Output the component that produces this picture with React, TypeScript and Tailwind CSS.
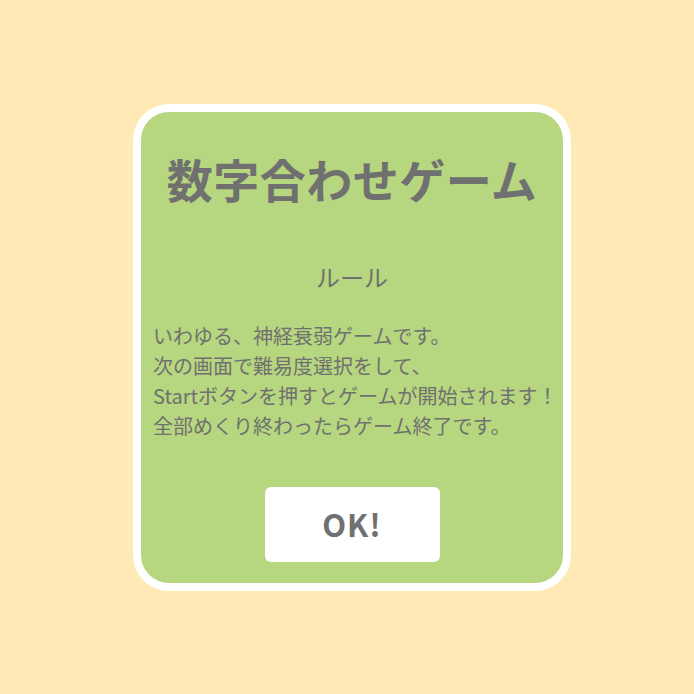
export default function App() {
  return (
    <div
      className="flex h-[694px] w-full items-center justify-center bg-[#ffe9b4]"
      style={{ fontFamily: '"Noto Sans CJK JP", "Noto Sans", sans-serif' }}
    >
      <div className="ml-[10px] flex h-[487px] w-[438px] flex-col items-center rounded-[36px] border-8 border-white bg-[#b6d67f] text-[#707070]">
        <h1 className="pt-[34px] text-[46px] font-bold leading-[64px] tracking-[0.5px]">数字合わせゲーム</h1>
        <h2 className="mt-[49px] text-[24px] leading-[36px]">ルール</h2>
        <p className="mt-[26px] self-stretch pl-[12px] text-[20px] leading-[30px] whitespace-nowrap">
          いわゆる、神経衰弱ゲームです。
          <br />
          次の画面で難易度選択をして、
          <br />
          Startボタンを押すとゲームが開始されます！
          <br />
          全部めくり終わったらゲーム終了です。
        </p>
        <button className="mt-[46px] h-[75px] w-[175px] rounded-md bg-white text-[31px] font-bold tracking-[1px] text-[#707070]">
          OK!
        </button>
      </div>
    </div>
  );
}
